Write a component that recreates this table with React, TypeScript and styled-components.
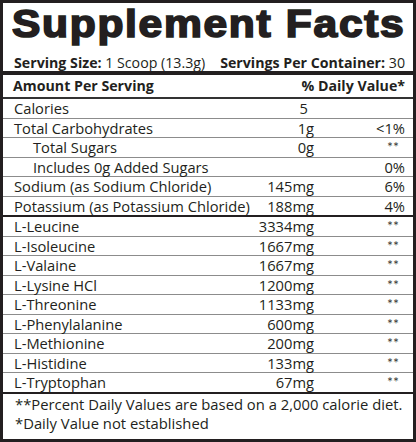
import React from 'react'
import styled, { createGlobalStyle } from 'styled-components'

const ink = '#231f20'

const GlobalStyle = createGlobalStyle`
  html, body {
    margin: 0;
    padding: 0;
    background: #fff;
  }
  body {
    font-family: "Open Sans", "Liberation Sans", sans-serif;
    color: ${ink};
  }
`

const Label = styled.div`
  width: 416px;
  height: 442px;
  box-sizing: border-box;
  border: 3px solid ${ink};
  background: #fff;
  display: flex;
  flex-direction: column;
`

const Header = styled.header`
  height: 72px;
  padding: 2px 8px 0 9px;
  box-sizing: border-box;
  border-bottom: 4px solid ${ink};
  display: flex;
  flex-direction: column;
`

const Title = styled.h1`
  margin: 0;
  display: inline-block;
  font-family: "Liberation Sans", Arial, sans-serif;
  font-weight: 700;
  font-size: 38px;
  line-height: 38px;
  letter-spacing: 1.5px;
  white-space: nowrap;
  transform: scaleX(1.12);
  transform-origin: left center;
  -webkit-text-stroke: 1.7px ${ink};
`

const Serving = styled.div`
  margin-top: 11px;
  display: flex;
  justify-content: space-between;
  font-size: 14.2px;
  line-height: 18px;
  padding-left: 2px;
  white-space: nowrap;
  b {
    font-weight: 700;
  }
`

const HeadRow = styled.div`
  height: 22px;
  padding: 0 8px 0 10px;
  display: flex;
  justify-content: space-between;
  font-size: 14.2px;
  font-weight: 700;
  line-height: 22px;
  border-bottom: 2px solid #333;
`

const Section = styled.section`
  border-bottom: 2px solid ${ink};
`

const Row = styled.div<{ $indent?: boolean }>`
  height: 18.5px;
  display: grid;
  grid-template-columns: minmax(0, 1fr) 80px 91px;
  padding: 0 8px 0 ${({ $indent }) => ($indent ? 30 : 11)}px;
  font-size: 14.7px;
  line-height: 18.5px;
  white-space: nowrap;

  & + & {
    border-top: 1px solid #8c8c8c;
  }
`

const Name = styled.span`
  overflow: visible;
`

const Amount = styled.span<{ $inset?: number }>`
  text-align: right;
  padding-right: ${({ $inset }) => $inset ?? 0}px;
`

const Daily = styled.span<{ $star?: boolean }>`
  text-align: right;
  padding-right: ${({ $star }) => ($star ? 6 : 0)}px;
  font-family: ${({ $star }) => ($star ? 'Lato, "Open Sans", sans-serif' : 'inherit')};
  font-size: ${({ $star }) => ($star ? '14px' : 'inherit')};
  color: ${({ $star }) => ($star ? '#3a3a3a' : 'inherit')};
`

const Footer = styled.footer`
  flex: 1;
  padding: 1px 8px 0 12px;
  font-size: 14.8px;
  line-height: 19px;
  white-space: nowrap;
`

type Item = { name: string; amount?: string; dv?: string; indent?: boolean; inset?: number }

const nutrients: Item[] = [
  { name: 'Calories', amount: '5', inset: 6 },
  { name: 'Total Carbohydrates', amount: '1g', dv: '<1%' },
  { name: 'Total Sugars', amount: '0g', dv: '**', indent: true },
  { name: 'Includes 0g Added Sugars', dv: '0%', indent: true },
  { name: 'Sodium (as Sodium Chloride)', amount: '145mg', dv: '6%' },
  { name: 'Potassium (as Potassium Chloride)', amount: '188mg', dv: '4%' },
]

const aminos: Item[] = [
  { name: 'L-Leucine', amount: '3334mg', dv: '**' },
  { name: 'L-Isoleucine', amount: '1667mg', dv: '**' },
  { name: 'L-Valaine', amount: '1667mg', dv: '**' },
  { name: 'L-Lysine HCl', amount: '1200mg', dv: '**' },
  { name: 'L-Threonine', amount: '1133mg', dv: '**' },
  { name: 'L-Phenylalanine', amount: '600mg', dv: '**' },
  { name: 'L-Methionine', amount: '200mg', dv: '**' },
  { name: 'L-Histidine', amount: '133mg', dv: '**' },
  { name: 'L-Tryptophan', amount: '67mg', dv: '**' },
]

const Rows = ({ items }: { items: Item[] }) => (
  <Section>
    {items.map((it) => (
      <Row key={it.name} $indent={it.indent}>
        <Name>{it.name}</Name>
        <Amount $inset={it.inset}>{it.amount}</Amount>
        <Daily $star={it.dv === '**'}>{it.dv}</Daily>
      </Row>
    ))}
  </Section>
)

export default function App() {
  return (
    <>
      <GlobalStyle />
      <Label>
        <Header>
          <div>
            <Title>Supplement Facts</Title>
          </div>
          <Serving>
            <span>
              <b>Serving Size:</b> 1 Scoop (13.3g)
            </span>
            <span>
              <b>Servings Per Container:</b> 30
            </span>
          </Serving>
        </Header>
        <HeadRow>
          <span>Amount Per Serving</span>
          <span>% Daily Value*</span>
        </HeadRow>
        <Rows items={nutrients} />
        <Rows items={aminos} />
        <Footer>
          <div>**Percent Daily Values are based on a 2,000 calorie diet.</div>
          <div>*Daily Value not established</div>
        </Footer>
      </Label>
    </>
  )
}
